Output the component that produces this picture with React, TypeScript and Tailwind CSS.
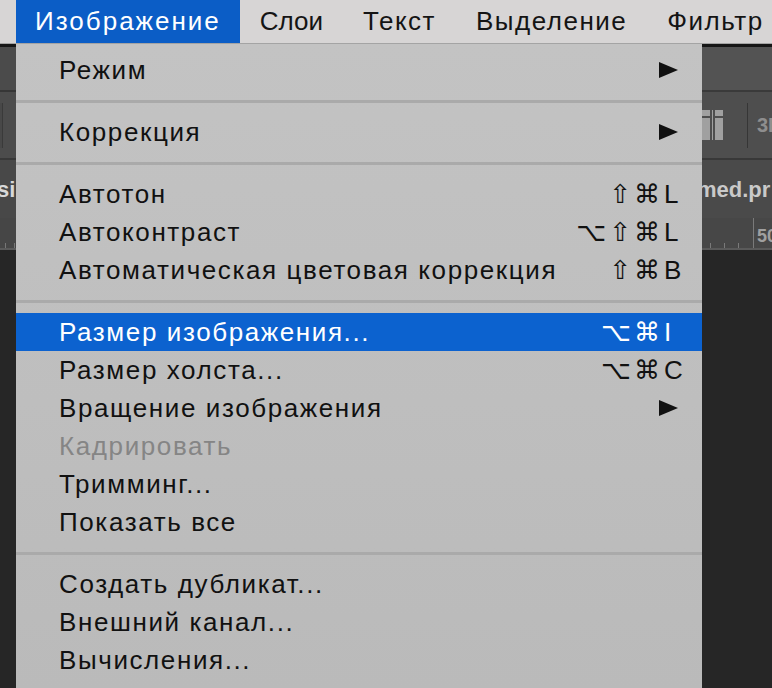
import React from 'react';

type Item =
  | { kind: 'sep' }
  | {
      kind: 'item';
      label: string;
      mods?: string;
      key?: string;
      submenu?: boolean;
      disabled?: boolean;
      active?: boolean;
    };

const items: Item[] = [
  { kind: 'item', label: 'Режим', submenu: true },
  { kind: 'sep' },
  { kind: 'item', label: 'Коррекция', submenu: true },
  { kind: 'sep' },
  { kind: 'item', label: 'Автотон', mods: '⇧⌘', key: 'L' },
  { kind: 'item', label: 'Автоконтраст', mods: '⌥⇧⌘', key: 'L' },
  { kind: 'item', label: 'Автоматическая цветовая коррекция', mods: '⇧⌘', key: 'B' },
  { kind: 'sep' },
  { kind: 'item', label: 'Размер изображения...', mods: '⌥⌘', key: 'I', active: true },
  { kind: 'item', label: 'Размер холста...', mods: '⌥⌘', key: 'C' },
  { kind: 'item', label: 'Вращение изображения', submenu: true },
  { kind: 'item', label: 'Кадрировать', disabled: true },
  { kind: 'item', label: 'Тримминг...' },
  { kind: 'item', label: 'Показать все' },
  { kind: 'sep' },
  { kind: 'item', label: 'Создать дубликат...' },
  { kind: 'item', label: 'Внешний канал...' },
  { kind: 'item', label: 'Вычисления...' },
];

// letter spacing tuned per title to match the mac menu bar widths
const topMenu = [
  { label: 'Слои', cls: 'tracking-[0px]' },
  { label: 'Текст', cls: 'tracking-[1.5px]' },
  { label: 'Выделение', cls: 'tracking-[1.5px]' },
  { label: 'Фильтр', cls: 'tracking-[1.5px]' },
];

function Arrow({ white }: { white?: boolean }) {
  return (
    <svg width="19" height="16" viewBox="0 0 19 16" className="shrink-0">
      <polygon points="0,0 19,8 0,16" fill={white ? '#ffffff' : '#111111'} />
    </svg>
  );
}

function MenuRow({ item }: { item: Extract<Item, { kind: 'item' }> }) {
  const color = item.active ? 'text-white' : item.disabled ? 'text-[#858585]' : 'text-[#111111]';
  return (
    <div
      className={`flex h-[38px] items-center pl-[43px] ${item.active ? 'bg-[#0c62cf]' : ''} ${color}`}
    >
      <span className="flex-1 whitespace-nowrap tracking-[1.6px]">{item.label}</span>
      {item.submenu && (
        <div className="mr-[24px]">
          <Arrow white={item.active} />
        </div>
      )}
      {item.key && (
        <div className="flex items-center pr-[16px]">
          <span className="whitespace-nowrap text-right font-['DejaVu_Sans',sans-serif] text-[26px] tracking-[3px]">
            {item.mods}
          </span>
          <span className="ml-[1px] w-[22px]">{item.key}</span>
        </div>
      )}
    </div>
  );
}

function LeftStrip() {
  return (
    <div className="flex w-[16px] shrink-0 flex-col overflow-hidden">
      <div className="h-[3px] bg-[#161616]" />
      <div className="h-[43px] bg-[#4b4b4b]" />
      <div className="h-[2px] bg-[#363636]" />
      <div className="flex h-[66px] items-center bg-[#4c4c4c]">
        <div className="h-[45px] w-[3px] shrink-0 border-r border-[#3a3a3a] bg-[#484848]" />
      </div>
      <div className="h-[2px] bg-[#383838]" />
      <div className="flex h-[58px] items-center bg-[#484848]">
        <span className="ml-[-3px] shrink-0 text-[22px] font-bold text-[#d8d8d8]">si</span>
      </div>
      <div className="relative h-[30px] bg-[#464646]">
        <div className="absolute bottom-0 left-[5px] h-[5px] w-px bg-[#777]" />
        <div className="absolute bottom-0 left-[14px] h-[5px] w-px bg-[#777]" />
      </div>
      <div className="h-[2px] bg-[#5a5a5a]" />
      <div className="flex-1 bg-[#262626]" />
    </div>
  );
}

function RightStrip() {
  return (
    <div className="flex w-[70px] shrink-0 flex-col overflow-hidden">
      <div className="h-[3px] bg-[#161616]" />
      <div className="h-[43px] bg-[#535353]" />
      <div className="h-[2px] bg-[#3a3a3a]" />
      <div className="flex h-[66px] items-center bg-[#4e4e4e]">
        <div className="flex h-[30px] w-[21px] shrink-0 gap-[2px]">
          <div className="flex flex-1 flex-col gap-[2px]">
            <div className="h-[6px] bg-[#a0a0a0]" />
            <div className="flex-1 bg-[#a0a0a0]" />
          </div>
          <div className="w-px bg-[#a0a0a0]" />
          <div className="flex flex-1 flex-col gap-[2px]">
            <div className="h-[6px] bg-[#a0a0a0]" />
            <div className="flex-1 bg-[#a0a0a0]" />
          </div>
        </div>
        <div className="ml-[24px] h-[45px] w-px shrink-0 bg-[#363636]" />
        <span className="ml-[9px] shrink-0 text-[20px] font-bold text-[#8e8e8e]">3D</span>
      </div>
      <div className="h-[2px] bg-[#383838]" />
      <div className="flex h-[58px] items-center bg-[#4a4a4a]">
        <span className="ml-[-5px] shrink-0 whitespace-nowrap text-[22px] font-bold text-[#c9c9c9]">med.pr</span>
      </div>
      <div className="relative h-[30px] bg-[#474747]">
        <div className="absolute bottom-0 left-[8px] h-[5px] w-px bg-[#7a7a7a]" />
        <div className="absolute bottom-0 left-[22px] h-[5px] w-px bg-[#7a7a7a]" />
        <div className="absolute bottom-0 left-[36px] h-[5px] w-px bg-[#7a7a7a]" />
        <div className="absolute bottom-0 left-[51px] top-0 w-px bg-[#7a7a7a]" />
        <span className="absolute left-[55px] top-[5px] text-[18px] font-bold text-[#a0a0a0]">50</span>
      </div>
      <div className="h-[2px] bg-[#5a5a5a]" />
      <div className="flex-1 bg-[#262626]" />
    </div>
  );
}

export default function App() {
  return (
    <div className="flex h-[688px] w-[772px] flex-col overflow-hidden bg-[#262626] font-['Liberation_Sans',Arial,sans-serif]">
      <div className="flex h-[44px] shrink-0 items-center border-b border-[#a4a4a4] bg-[#d7d5d5] pl-[16px] text-[26px] text-[#141414]">
        <div className="flex h-full shrink-0 items-center whitespace-nowrap bg-[#0b5dc6] px-[19px] tracking-[2px] text-white">
          Изображение
        </div>
        {topMenu.map((m) => (
          <div
            key={m.label}
            className={`flex h-full shrink-0 items-center whitespace-nowrap px-[20px] ${m.cls}`}
          >
            {m.label}
          </div>
        ))}
      </div>
      <div className="flex flex-1">
        <LeftStrip />
        <div className="w-[686px] shrink-0 bg-gradient-to-b from-[#c3c3c3] to-[#bababa] pt-[7px] text-[26px]">
          {items.map((it, i) =>
            it.kind === 'sep' ? (
              <div key={i} className="flex h-[24px] items-center">
                <div className="h-[3px] w-full bg-[#aaaaaa]" />
              </div>
            ) : (
              <MenuRow key={i} item={it} />
            ),
          )}
        </div>
        <RightStrip />
      </div>
    </div>
  );
}
